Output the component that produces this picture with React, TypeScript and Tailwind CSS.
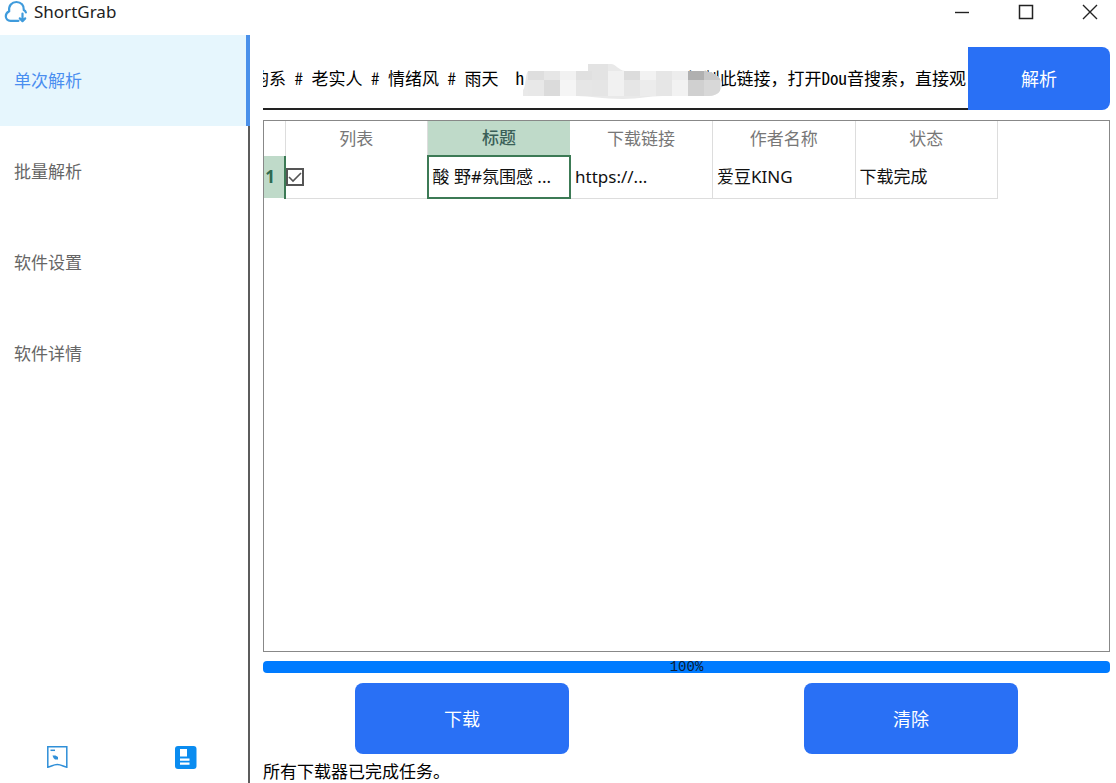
import { useState } from "react";

const navItems = ["单次解析", "批量解析", "软件设置", "软件详情"];

const columns = ["列表", "标题", "下载链接", "作者名称", "状态"];

const shareText =
  "韵系 # 老实人 # 情绪风 # 雨天  h                   复制此链接，打开Dou音搜索，直接观";

// Two rows of mosaic tiles, left to right
const mosaicTop = ["#dedede", "#e6e6e6", "#f1f1f1", "#e0e0e0", "#e3e3e3", "#f1f1f1", "#dcdcdc", "#f2f2f2", "#e6e6e6", "#ededed", "#b0b0b0", "#c8c8c8"];
const mosaicBottom = ["#e8e8e8", "#dbdbdb", "#f5f5f5", "#e6e6e6", "#e5e5e5", "#f1f1f1", "#e6e6e6", "#ececec", "#e6e6e6", "#f2f2f2", "#d0d0d0", "#d8d8d8"];

function CloudLogo() {
  return (
    <svg viewBox="0 0 24 24" className="h-6 w-6" fill="none" stroke="#3f9bdc" strokeWidth="2.2" strokeLinecap="round" strokeLinejoin="round">
      <path d="M14.500 20.800H6.500C3.600 20.800 1.800 18.800 1.800 16.200 1.800 13.800 3.200 12.300 5.200 11.300 4.300 5.500 8 2 12.400 2 17 2 20.300 5.200 19.800 10 21 10.600 21.600 11.400 21.900 12.500" />
      <path d="M18.500 13.500v7.500M15.800 18.400l2.700 2.700 2.700-2.700" />
    </svg>
  );
}

function TitleBar() {
  return (
    <header className="flex h-[35px] items-start justify-between">
      <div className="flex h-6 items-center gap-1.5 pl-1">
        <CloudLogo />
        <h1 className="text-[17px] leading-6 text-[#222]">ShortGrab</h1>
      </div>
      <div className="flex h-6 items-center gap-12 pr-[18px]">
        <button type="button" aria-label="最小化">
          <svg viewBox="0 0 16 16" className="h-4 w-4" stroke="#222" strokeWidth="1.4">
            <path d="M1 8.5h14" />
          </svg>
        </button>
        <button type="button" aria-label="最大化">
          <svg viewBox="0 0 16 16" className="h-4 w-4" fill="none" stroke="#222" strokeWidth="1.5">
            <path d="M1.5 1.5h13v13h-13z" />
          </svg>
        </button>
        <button type="button" aria-label="关闭">
          <svg viewBox="0 0 16 16" className="h-4 w-4" stroke="#222" strokeWidth="1.4">
            <path d="M1 1l14 14M15 1L1 15" />
          </svg>
        </button>
      </div>
    </header>
  );
}

function Sidebar() {
  const [active, setActive] = useState(navItems[0]);

  return (
    <aside className="flex w-[250px] shrink-0 flex-col">
      <nav className="flex flex-1 flex-col">
        {navItems.map((item) => (
          <button
            key={item}
            type="button"
            onClick={() => setActive(item)}
            className={
              item === active
                ? "h-[91px] border-r-4 border-[#4a90ea] bg-[#e6f6fd] pl-3.5 text-left text-[17px] text-[#4a8ef0]"
                : "h-[91px] border-r-2 border-[#5c5c5c] pl-3.5 text-left text-[17px] text-[#666]"
            }
          >
            {item}
          </button>
        ))}
        <div className="flex-1 border-r-2 border-[#5c5c5c]" />
      </nav>
      <div className="flex justify-between border-r-2 border-[#5c5c5c] pr-[50px] pb-3.5 pl-[45px]">
        <button type="button" aria-label="收藏">
          <svg viewBox="0 0 24 24" className="h-6 w-6" fill="none" stroke="#2f8fd8" strokeWidth="1.5">
            <path d="M2.800 1.800h19v20.400c-3-.400-5.500-2.600-9.500-2.600s-6.500 2.200-9.500 2.600z" />
            <path d="M5.500 5.300h4.500" />
            <path d="M7.500 10.500h3l2.500 1.500v2.500h-3l-1.500-1.500z" fill="#2f8fd8" stroke="none" />
          </svg>
        </button>
        <button type="button" aria-label="文档">
          <svg viewBox="0 0 24 24" className="h-6 w-6">
            <rect x="1" y="1" width="21.500" height="23" rx="3" fill="#0a8cf0" />
            <path d="M6 4h7v7.500H6zM6 13.500h9.500v2.200H6zM6 17.500h9.500v2.200H6z" fill="#fff" />
          </svg>
        </button>
      </div>
    </aside>
  );
}

// Mosaic over the private part of the link
function Mosaic() {
  return (
    <svg
      viewBox="0 0 200 36"
      shapeRendering="crispEdges"
      className="pointer-events-none absolute top-4 left-[260px] h-9 w-[200px]"
    >
      <clipPath id="smear">
        <path d="M5 8H65V1H88C93 1 95 7 102 8H181C190 9 199 14 199 21 199 28 194 33 186 33H140C124 33 118 36 100 36 78 36 68 33 54 33H0V27C3 24 2 12 5 8Z" />
      </clipPath>
      <g clipPath="url(#smear)">
        <path d="M0 0h200v36H0z" fill="#e9e9e9" />
        <path d="M65 0h20v8H65z" fill="#e3e3e3" />
        {mosaicTop.map((color, index) => (
          <rect key={index} x={5 + index * 16} y={8} width={16} height={9} fill={color} />
        ))}
        {mosaicBottom.map((color, index) => (
          <rect key={index} x={5 + index * 16} y={17} width={16} height={16} fill={color} />
        ))}
      </g>
    </svg>
  );
}

function LinkForm() {
  const [link, setLink] = useState(shareText);

  return (
    <form className="flex h-[63px]" onSubmit={(event) => event.preventDefault()}>
      <div className="relative flex min-w-0 flex-1">
        <input
          aria-label="分享链接"
          value={link}
          onChange={(event) => setLink(event.target.value)}
          className="w-full border-b-2 border-[#222] indent-[-11px] font-['Noto_Sans_Mono_CJK_SC','Liberation_Mono','Noto_Sans_CJK_SC',monospace] text-[17px] text-black outline-none"
        />
        <Mosaic />
      </div>
      <button type="submit" className="w-[142px] rounded-r-lg bg-[#2970f5] text-lg text-white">
        解析
      </button>
    </form>
  );
}

function ResultTable() {
  const [checked, setChecked] = useState(true);

  return (
    <div className="mt-2.5 flex-1 overflow-auto border border-[#888]">
      <table className="w-[734px] table-fixed border-collapse text-[17px]">
        <thead>
          <tr className="h-[35px] text-[#777]">
            <th aria-label="序号" className="w-[21px] border-r border-[#ddd]" />
            {columns.map((column) => (
              <th
                key={column}
                className={
                  column === "标题"
                    ? "border-b-2 border-[#3c7a55] bg-[#bfdac9] font-medium text-[#3a5f58]"
                    : "border-r border-[#ddd] font-normal"
                }
              >
                {column}
              </th>
            ))}
          </tr>
        </thead>
        <tbody>
          <tr className="h-[42px] text-[#111]">
            <th className="border-r-2 border-[#3c7a55] bg-[#bfdac9] pr-2 text-[#2f6a50]">1</th>
            <td className="border-b border-[#ddd]">
              <span className="relative flex h-[18px] w-[18px]">
                <input
                  type="checkbox"
                  aria-label="选择第 1 行"
                  checked={checked}
                  onChange={(event) => setChecked(event.target.checked)}
                  className="h-[18px] w-[18px] appearance-none border-2 border-[#555] bg-white"
                />
                {checked && (
                  <svg viewBox="0 0 18 18" className="pointer-events-none absolute inset-0" fill="none" stroke="#555" strokeWidth="1.6">
                    <path d="M3 9l4 4 8-8" />
                  </svg>
                )}
              </span>
            </td>
            <td className="border-2 border-[#3c7a55] px-1">酸 野#氛围感 ...</td>
            <td className="border-r border-b border-[#ddd] px-1">https://...</td>
            <td className="border-r border-b border-[#ddd] px-1">爱豆KING</td>
            <td className="border-r border-b border-[#ddd] px-1">下载完成</td>
          </tr>
        </tbody>
      </table>
    </div>
  );
}

export default function App() {
  return (
    <div className="flex min-h-screen flex-col bg-white font-['Noto_Sans','Noto_Sans_CJK_SC',sans-serif]">
      <TitleBar />
      <div className="flex flex-1">
        <Sidebar />
        <main className="flex min-w-0 flex-1 flex-col pt-3 pr-1.5 pl-[13px]">
          <LinkForm />
          <ResultTable />
          <div
            role="progressbar"
            aria-label="下载进度"
            aria-valuenow={100}
            className="mt-[9px] flex h-3 items-center justify-center rounded-sm bg-[#007bff] font-['Liberation_Mono',monospace] text-sm leading-3 text-[#0b1c33]"
          >
            100%
          </div>
          <div className="mt-2.5 flex justify-between px-[92px]">
            <button type="button" className="h-[71px] w-[214px] rounded-lg bg-[#2970f5] text-lg text-white">
              下载
            </button>
            <button type="button" className="h-[71px] w-[214px] rounded-lg bg-[#2970f5] text-lg text-white">
              清除
            </button>
          </div>
          <p className="mt-1.5 text-[17px] leading-[23px] text-black">所有下载器已完成任务。</p>
        </main>
      </div>
    </div>
  );
}
